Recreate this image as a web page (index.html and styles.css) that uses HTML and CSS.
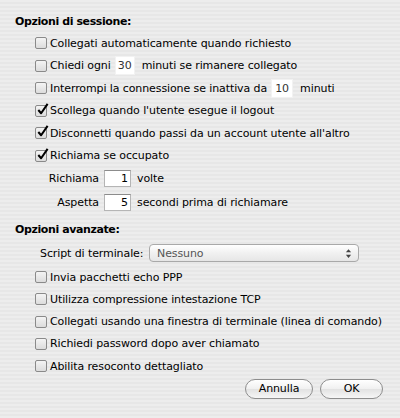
FILE: index.html
```html
<!DOCTYPE html>
<html lang="it">
<head>
<meta charset="utf-8">
<link rel="stylesheet" href="styles.css">
</head>
<body>
<div class="sheet">
  <div class="heading">Opzioni di sessione:</div>

  <div class="row"><span class="cb"></span><span>Collegati automaticamente quando richiesto</span></div>
  <div class="row"><span class="cb"></span><span>Chiedi ogni</span><span class="tf tf-30">30</span><span>minuti se rimanere collegato</span></div>
  <div class="row"><span class="cb"></span><span>Interrompi la connessione se inattiva da</span><span class="tf tf-10">10</span><span>minuti</span></div>
  <div class="row"><span class="cb on"><svg viewBox="0 0 14 14"><path d="M2.5 7.5 L5.5 11 L12.5 1" /></svg></span><span>Scollega quando l'utente esegue il logout</span></div>
  <div class="row"><span class="cb on"><svg viewBox="0 0 14 14"><path d="M2.5 7.5 L5.5 11 L12.5 1" /></svg></span><span>Disconnetti quando passi da un account utente all'altro</span></div>
  <div class="row"><span class="cb on"><svg viewBox="0 0 14 14"><path d="M2.5 7.5 L5.5 11 L12.5 1" /></svg></span><span>Richiama se occupato</span></div>

  <div class="subrow sub1"><span class="lbl">Richiama</span><span class="num">1</span><span>volte</span></div>
  <div class="subrow sub2"><span class="lbl">Aspetta</span><span class="num">5</span><span>secondi prima di richiamare</span></div>

  <div class="heading heading2">Opzioni avanzate:</div>

  <div class="script-row">
    <span class="slbl">Script di terminale:</span>
    <div class="popup">
      <span>Nessuno</span>
      <svg class="arrows" viewBox="0 0 8 12"><path d="M4 1 L7 4.5 L1 4.5 Z M4 11 L7 7.5 L1 7.5 Z"/></svg>
    </div>
  </div>

  <div class="row row2"><span class="cb"></span><span>Invia pacchetti echo PPP</span></div>
  <div class="row row2"><span class="cb"></span><span>Utilizza compressione intestazione TCP</span></div>
  <div class="row row2"><span class="cb"></span><span>Collegati usando una finestra di terminale (linea di comando)</span></div>
  <div class="row row2"><span class="cb"></span><span>Richiedi password dopo aver chiamato</span></div>
  <div class="row row2"><span class="cb"></span><span>Abilita resoconto dettagliato</span></div>

  <div class="buttons">
    <div class="btn btn-cancel">Annulla</div>
    <div class="btn btn-ok">OK</div>
  </div>
</div>
</body>
</html>
```

FILE: styles.css
```css
html, body {
  margin: 0;
  padding: 0;
}
body {
  width: 400px;
  height: 418px;
  overflow: hidden;
  background-color: #ebebeb;
  background-image: repeating-linear-gradient(to bottom, #ededed 0px, #ededed 2px, #e7e7e7 2px, #e7e7e7 4px);
  font-family: "DejaVu Sans", sans-serif;
  font-size: 11px;
  letter-spacing: -0.1px;
  color: #000;
}
.sheet {
  padding-top: 12px;
  display: flex;
  flex-direction: column;
}
.heading {
  height: 20px;
  line-height: 20px;
  padding-left: 15px;
  font-weight: bold;
  letter-spacing: -0.4px;
}
.heading2 {
  margin-top: 6px;
}
.row {
  height: 22.5px;
  display: flex;
  align-items: center;
  padding-left: 35px;
  white-space: nowrap;
}
.row2 {
  height: 22.25px;
}
.cb {
  width: 10px;
  height: 10px;
  border: 1px solid #8a8a8a;
  border-radius: 2px;
  background: linear-gradient(to bottom, #f4f4f4, #dcdcdc);
  margin-right: 3px;
  position: relative;
  flex: none;
}
.cb svg {
  position: absolute;
  left: 0;
  top: -3px;
  width: 13px;
  height: 13px;
  fill: none;
  stroke: #000;
  stroke-width: 2.2;
  stroke-linejoin: round;
}
.tf {
  background: #fff;
  height: 17px;
  line-height: 17px;
  text-align: center;
  color: #333;
  margin: 0 8px 0 5px;
  box-shadow: 0 0 0 1px #f2f2f2;
}
.tf-30 {
  width: 18px;
}
.tf-10 {
  width: 20px;
}
.subrow {
  display: flex;
  align-items: center;
  white-space: nowrap;
}
.sub1 {
  height: 23px;
}
.sub2 {
  height: 24px;
}
.lbl {
  width: 99px;
  text-align: right;
}
.num {
  width: 23px;
  height: 15px;
  line-height: 15px;
  margin: 0 6px 0 5px;
  padding-right: 2px;
  text-align: right;
  background: #fff;
  border: 1px solid #b5b5b5;
  border-top-color: #8c8c8c;
}
.script-row {
  height: 26px;
  display: flex;
  align-items: center;
  padding-left: 40px;
  white-space: nowrap;
}
.slbl {
  width: 109px;
}
.popup {
  width: 195px;
  height: 16px;
  border: 1px solid #a9a9a9;
  border-radius: 4px;
  background: linear-gradient(to bottom, #ffffff, #f1f1f1 50%, #e6e6e6);
  display: flex;
  align-items: center;
  justify-content: space-between;
  padding-left: 7px;
  padding-right: 6px;
  color: #555;
}
.arrows {
  width: 7px;
  height: 11px;
  fill: #444;
}
.buttons {
  margin-top: 2px;
  display: flex;
  justify-content: flex-end;
  padding-right: 17px;
  gap: 7px;
}
.btn {
  height: 18px;
  line-height: 18px;
  border: 1px solid #8d8d8d;
  border-radius: 10px;
  background: linear-gradient(to bottom, #ffffff, #f0f0f0 50%, #e2e2e2 51%, #f6f6f6);
  text-align: center;
}
.btn-cancel {
  width: 66px;
}
.btn-ok {
  width: 61px;
}
```
